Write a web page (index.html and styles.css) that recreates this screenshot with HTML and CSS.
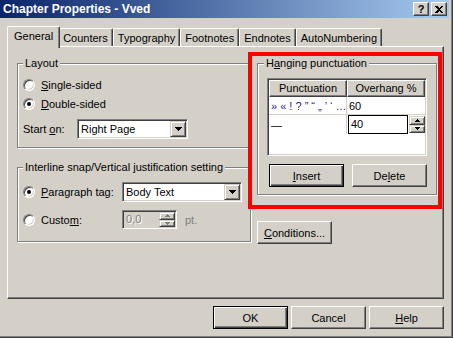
FILE: index.html
```html
<!DOCTYPE html>
<html lang="en">
<head>
  <meta charset="UTF-8" />
  <title>Chapter Properties - Vved</title>
  <link rel="stylesheet" href="styles.css">
</head>
<body>

  <div class="window">

    <!-- Caption -->
    <div class="titlebar">
      <span class="title">Chapter Properties - Vved</span>
      <span class="cap-btn">?</span>
      <span class="cap-btn close">
        <svg width="8" height="7" viewBox="0 0 8 7" shape-rendering="crispEdges"><path d="M0 0h2l2 2 2-2h2L5 3.5 8 7H6L4 5 2 7H0l3-3.5z" fill="#000"/></svg>
      </span>
    </div>

    <!-- Tab strip -->
    <div class="tabs">
      <div class="tab active">General</div>
      <div class="tab">Counters</div>
      <div class="tab">Typography</div>
      <div class="tab">Footnotes</div>
      <div class="tab">Endnotes</div>
      <div class="tab">AutoNumbering</div>
    </div>

    <div class="panel">

      <div class="col-left">
        <div class="group layout">
          <div class="group-title">Layout</div>
          <div class="radio-row first"><span class="radio"></span><span><u>S</u>ingle-sided</span></div>
          <div class="radio-row"><span class="radio checked"></span><span><u>D</u>ouble-sided</span></div>
          <div class="field-row">
            <span class="start-label">Start <u>o</u>n:</span>
            <div class="combo w-start">
              <span class="combo-text">Right Page</span>
              <span class="combo-btn"><svg width="7" height="4" viewBox="0 0 7 4" shape-rendering="crispEdges"><path d="M0 0h7L3.5 4z" fill="#000"/></svg></span>
            </div>
          </div>
        </div>

        <div class="group interline">
          <div class="group-title">Interline snap/Vertical justification setting</div>
          <div class="radio-row para">
            <span class="radio checked"></span>
            <span class="opt-label"><u>P</u>aragraph tag:</span>
            <div class="combo w-para">
              <span class="combo-text">Body Text</span>
              <span class="combo-btn"><svg width="7" height="4" viewBox="0 0 7 4" shape-rendering="crispEdges"><path d="M0 0h7L3.5 4z" fill="#000"/></svg></span>
            </div>
          </div>
          <div class="radio-row custom">
            <span class="radio"></span>
            <span class="opt-label">Custo<u>m</u>:</span>
            <div class="spin-field">
              <span class="spin-text">0,0</span>
              <span class="spin">
                <span class="spin-btn"><svg width="5" height="3" viewBox="0 0 5 3" shape-rendering="crispEdges"><path d="M0 3h5L2.5 0z" fill="#808080"/></svg></span>
                <span class="spin-btn"><svg width="5" height="3" viewBox="0 0 5 3" shape-rendering="crispEdges"><path d="M0 0h5L2.5 3z" fill="#808080"/></svg></span>
              </span>
            </div>
            <span class="unit">pt.</span>
          </div>
        </div>
      </div>

      <div class="col-right">
        <div class="highlight">
          <div class="group hanging">
            <div class="group-title">H<u>a</u>nging punctuation</div>
            <div class="listview">
              <div class="lv-head">Punctuation</div>
              <div class="lv-head">Overhang %</div>
              <div class="lv-cell sep punct">» « ! ? ” “ „ ’ ‘ …</div>
              <div class="lv-cell line">60</div>
              <div class="lv-cell sep-right">—</div>
              <div class="lv-cell edit-cell">
                <span class="lv-edit">40</span>
                <span class="spin">
                  <span class="spin-btn"><svg width="5" height="3" viewBox="0 0 5 3" shape-rendering="crispEdges"><path d="M0 3h5L2.5 0z" fill="#000"/></svg></span>
                  <span class="spin-btn"><svg width="5" height="3" viewBox="0 0 5 3" shape-rendering="crispEdges"><path d="M0 0h5L2.5 3z" fill="#000"/></svg></span>
                </span>
              </div>
            </div>
            <div class="btn-row">
              <button class="btn default"><u>I</u>nsert</button>
              <button class="btn">De<u>l</u>ete</button>
            </div>
          </div>
        </div>
        <button class="btn conditions"><u>C</u>onditions...</button>
      </div>

    </div>

    <div class="footer">
      <button class="btn default">OK</button>
      <button class="btn">Cancel</button>
      <button class="btn"><u>H</u>elp</button>
    </div>

  </div>

</body>
</html>
```

FILE: styles.css
```css
:root {
  --face: #D4D0C8;
  --shadow: #808080;
  --dark: #404040;
}

* {
  box-sizing: border-box;
}

body {
  margin: 0;
  font-family: "Liberation Sans", Arial, sans-serif;
  font-size: 11px;
  color: #000;
  background: var(--face);
}

.window {
  width: 453px;
  height: 338px;
  overflow: hidden;
  background: var(--face);
  box-shadow: inset -1px -1px var(--dark), inset -2px -2px var(--shadow);
}

/* Caption */
.titlebar {
  width: 449px;
  height: 18px;
  display: flex;
  align-items: center;
  padding: 0 2px 0 3px;
  background: linear-gradient(to right, #0A246A, #A6CAF0);
}

.title {
  flex: 1;
  color: #fff;
  font-weight: bold;
  font-size: 12px;
}

.cap-btn {
  width: 16px;
  height: 14px;
  display: flex;
  align-items: center;
  justify-content: center;
  background: var(--face);
  border: 1px solid;
  border-color: #fff var(--dark) var(--dark) #fff;
  box-shadow: inset -1px -1px var(--shadow);
  font-weight: bold;
  line-height: 1;
}

.cap-btn.close {
  margin-left: 2px;
}

/* Tabs */
.tabs {
  display: flex;
  align-items: flex-end;
  height: 20px;
  margin: 8px 0 0 9px;
}

.tab {
  height: 18px;
  padding: 3px 4px 0;
  border: 1px solid;
  border-bottom: none;
  border-color: #fff var(--dark) transparent #fff;
  box-shadow: inset -1px 0 var(--shadow);
  border-radius: 2px 2px 0 0;
  line-height: 13px;
  white-space: nowrap;
}

.tab.active {
  position: relative;
  z-index: 1;
  height: 22px;
  margin: 0 -2px -2px;
  padding: 3px 6px 0;
  background: var(--face);
}

/* Tab page */
.panel {
  display: flex;
  width: 437px;
  height: 253px;
  margin-left: 7px;
  padding: 5px 0 0 9px;
  border: 1px solid;
  border-color: #fff var(--dark) var(--dark) #fff;
  box-shadow: inset -1px -1px var(--shadow);
}

.col-left {
  width: 234px;
  flex: none;
  padding-top: 11px;
}

.col-right {
  margin-left: -3px;
}

/* Group boxes */
.group {
  border: 1px solid var(--shadow);
  box-shadow: 1px 1px #fff, inset 1px 1px #fff;
}

.group-title {
  width: fit-content;
  margin-top: -7px;
  padding: 0 2px;
  background: var(--face);
  line-height: 13px;
  white-space: nowrap;
}

.layout {
  padding: 0 5px 8px;
}

.interline {
  margin-top: 19px;
  padding: 0 5px 12px;
}

.radio-row {
  display: flex;
  align-items: center;
  height: 19px;
}

.radio-row.first {
  margin-top: 5px;
}

.radio-row.para {
  height: 20px;
  margin-top: 8px;
}

.radio-row.custom {
  margin-top: 8px;
}

.radio {
  width: 12px;
  height: 12px;
  flex: none;
  margin-right: 6px;
  display: flex;
  align-items: center;
  justify-content: center;
  border-radius: 50%;
  background: #fff;
  border: 1px solid;
  border-color: var(--shadow) #fff #fff var(--shadow);
  box-shadow: inset 1px 1px var(--dark), inset -1px -1px var(--face);
}

.radio.checked::after {
  content: "";
  width: 4px;
  height: 4px;
  border-radius: 50%;
  background: #000;
}

.field-row {
  display: flex;
  align-items: center;
  margin-top: 6px;
}

.start-label {
  width: 54px;
}

.opt-label {
  width: 81px;
}

/* Sunken fields */
.combo,
.spin-field {
  display: flex;
  padding: 1px;
  border: 1px solid;
  border-color: var(--shadow) #fff #fff var(--shadow);
  box-shadow: inset 1px 1px var(--dark), inset -1px -1px var(--face);
}

.combo {
  height: 20px;
  background: #fff;
}

.w-start {
  width: 111px;
}

.w-para {
  width: 120px;
}

.combo-text {
  flex: 1;
  padding-left: 2px;
  line-height: 16px;
}

.combo-btn,
.spin-btn {
  display: flex;
  align-items: center;
  justify-content: center;
  background: var(--face);
  border: 1px solid;
  border-color: var(--face) var(--dark) var(--dark) var(--face);
  box-shadow: inset 1px 1px #fff, inset -1px -1px var(--shadow);
}

.combo-btn {
  width: 16px;
  height: 16px;
}

.spin-field {
  width: 55px;
  height: 19px;
  background: var(--face);
}

.spin-text {
  flex: 1;
  padding-left: 2px;
  line-height: 15px;
  color: var(--shadow);
  text-shadow: 1px 1px #fff;
}

.spin {
  width: 16px;
  display: flex;
  flex-direction: column;
}

.spin-btn {
  flex: 1;
}

.unit {
  margin-left: 8px;
  color: var(--shadow);
}

/* Highlighted area */
.highlight {
  width: 194px;
  height: 157px;
  border: 4px solid #f00;
  padding: 7px 1px 0 5px;
}

.hanging {
  width: 180px;
  padding: 0 0 7px 9px;
}

.hanging .group-title {
  margin-left: -3px;
}

.listview {
  width: 160px;
  height: 78px;
  margin-top: 8px;
  padding: 1px;
  display: grid;
  grid-template-columns: 78px 78px;
  grid-template-rows: 17px 18px 19px;
  align-content: start;
  background: #fff;
  border: 1px solid;
  border-color: var(--shadow) #fff #fff var(--shadow);
  box-shadow: inset 1px 1px var(--dark), inset -1px -1px var(--face);
}

.lv-head {
  text-align: center;
  line-height: 15px;
  background: var(--face);
  border: 1px solid;
  border-color: #fff var(--dark) var(--dark) #fff;
  box-shadow: inset -1px -1px var(--shadow);
}

.lv-cell {
  display: flex;
  align-items: center;
  padding-left: 2px;
  white-space: nowrap;
}

.lv-cell.sep {
  border-right: 1px solid var(--face);
  border-bottom: 1px solid var(--face);
}

.lv-cell.line {
  border-bottom: 1px solid var(--face);
}

.lv-cell.sep-right {
  border-right: 1px solid var(--face);
}

.punct {
  color: #2b1a82;
  overflow: hidden;
}

.edit-cell {
  padding-left: 1px;
  overflow: visible;
}

.lv-edit {
  width: 60px;
  height: 19px;
  flex: none;
  margin-right: 1px;
  padding-left: 2px;
  line-height: 17px;
  border: 1px solid #000;
}

.edit-cell .spin {
  height: 17px;
  flex: none;
}

/* Buttons */
.btn {
  width: 75px;
  height: 23px;
  padding: 0;
  font: inherit;
  color: #000;
  background: var(--face);
  border: 1px solid;
  border-color: #fff var(--dark) var(--dark) #fff;
  box-shadow: inset -1px -1px var(--shadow);
}

.btn.default {
  border-color: #000;
  box-shadow: inset 1px 1px #fff, inset -1px -1px var(--dark), inset -2px -2px var(--shadow);
}

.btn-row {
  display: flex;
  gap: 8px;
  margin-top: 8px;
  padding-left: 2px;
}

.conditions {
  display: block;
  margin: 12px 0 0 9px;
}

.footer {
  display: flex;
  justify-content: flex-end;
  gap: 3px;
  width: 437px;
  margin: 7px 0 0 7px;
}
```
